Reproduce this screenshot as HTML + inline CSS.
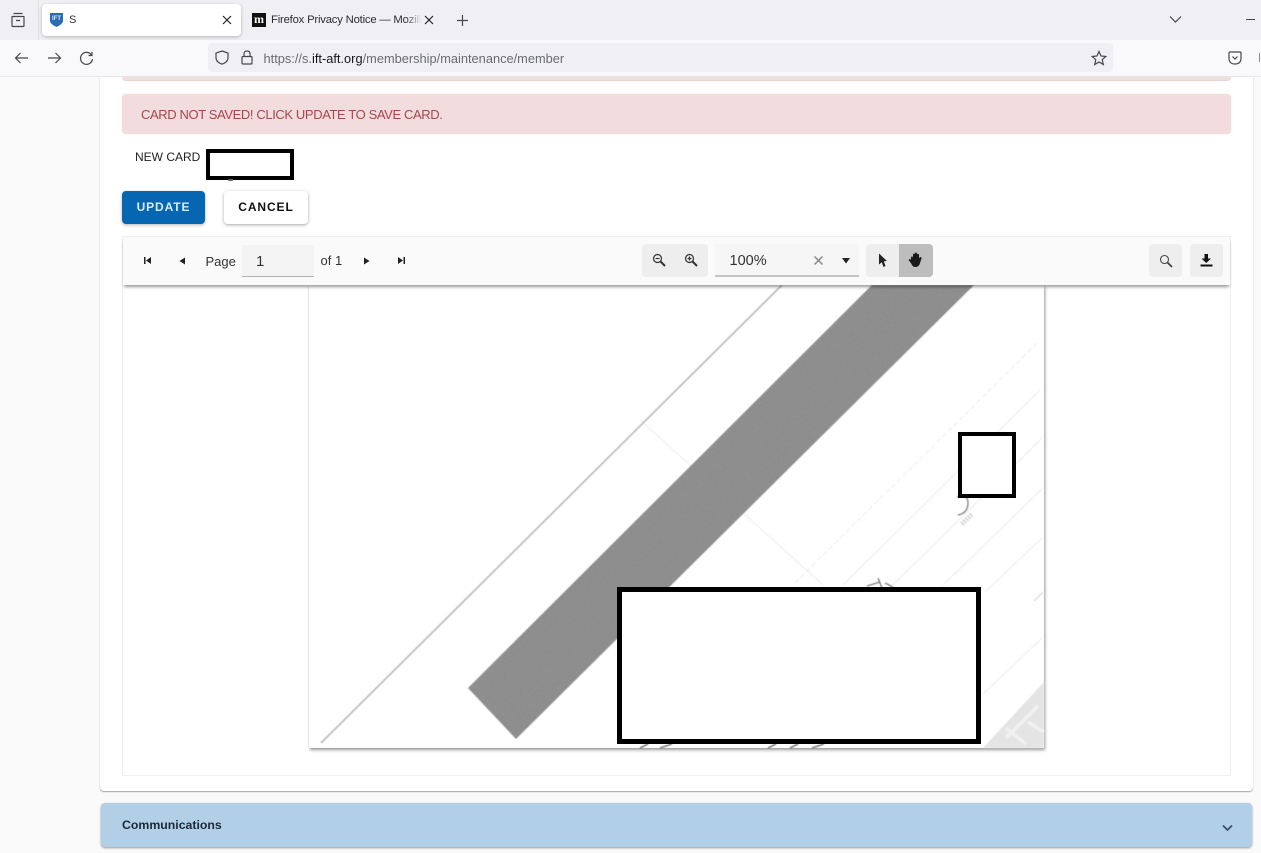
<!DOCTYPE html>
<html>
<head>
<meta charset="utf-8">
<title>S</title>
<style>
html,body{margin:0;padding:0;width:1261px;height:853px;overflow:hidden;background:#fafafa;font-family:"Liberation Sans",sans-serif;color:#222}
.a{position:absolute}
svg{position:absolute;overflow:visible}
.t{position:absolute;white-space:nowrap}
.btn{position:absolute;background:#eeeeee;border-radius:4px}
</style>
</head>
<body>
<!-- browser tab bar -->
<div class="a" style="left:0;top:0;width:1261px;height:40px;background:#f0f0f4"></div>
<div class="a" style="left:0;top:40px;width:1261px;height:36px;background:#f9f9fb"></div>
<div class="a" style="left:0;top:76px;width:1261px;height:1px;background:#e8e6e6"></div>
<div class="a" style="left:38px;top:0;width:1px;height:40px;background:#e0e0e4"></div>
<svg style="left:10px;top:12px" width="16" height="16" fill="none" stroke="#45454d" stroke-width="1.200"><path d="M3.500 1.500H12.500M1.500 4.500H14.500M2 5V13.500Q2 14.500 3 14.500H13Q14 14.500 14 13.500V5M6 8.500H10"/></svg>
<div class="a" style="left:42px;top:4px;width:199px;height:32px;background:#fff;border-radius:4px;box-shadow:0 1px 3px rgba(0,0,0,.25)"></div>
<svg style="left:50px;top:13px" width="13" height="14"><path d="M0 0H13V8Q13 11 6.500 14Q0 11 0 8Z" fill="#2a6cb5"/><text x="6.500" y="7" font-size="6" font-weight="bold" text-anchor="middle" fill="#dbe8f5" font-family="Liberation Sans, sans-serif">IFT</text></svg>
<div class="t" style="left:69px;top:14px;font-size:11px;color:#333">S</div>
<svg style="left:222px;top:15px" width="10" height="10" stroke="#222" stroke-width="1.200"><path d="M1 1L9 9M9 1L1 9"/></svg>
<div class="a" style="left:252px;top:13px;width:14px;height:14px;background:#111;color:#fff;font:bold 12px/13px 'Liberation Serif',serif;text-align:center;overflow:hidden">m</div>
<div class="t" style="left:271px;top:14px;width:150px;overflow:hidden;font-size:11.300px;color:#2b2b33;letter-spacing:-.2px;-webkit-mask-image:linear-gradient(90deg,#000 90%,transparent)">Firefox Privacy Notice — Mozilla</div>
<svg style="left:424px;top:15px" width="10" height="10" stroke="#222" stroke-width="1.200"><path d="M1 1L9 9M9 1L1 9"/></svg>
<svg style="left:456px;top:14px" width="13" height="13" stroke="#45454d" stroke-width="1.200"><path d="M6.500 1V12M1 6.500H12"/></svg>
<svg style="left:1169px;top:15px" width="13" height="9" fill="none" stroke="#45454d" stroke-width="1.200"><path d="M1 1.500L6.500 7L12 1.500"/></svg>
<div class="a" style="left:1246px;top:19px;width:9px;height:1px;background:#45454d"></div>

<!-- nav bar -->
<svg style="left:14px;top:51px" width="15" height="14" fill="none" stroke="#45454d" stroke-width="1.200"><path d="M14 7H1.500M6.500 2L1.500 7L6.500 12"/></svg>
<svg style="left:47px;top:51px" width="15" height="14" fill="none" stroke="#45454d" stroke-width="1.200"><path d="M1 7H13.500M8.500 2L13.500 7L8.500 12"/></svg>
<svg style="left:79px;top:51px" width="15" height="15" fill="none" stroke="#45454d" stroke-width="1.200"><path d="M12.500 4A6 6 0 1 0 13.500 8M13 1V4.500H9.500"/></svg>
<div class="a" style="left:208px;top:43px;width:905px;height:29px;background:#f0f0f4;border-radius:4px"></div>
<svg style="left:215px;top:50px" width="14" height="15" fill="none" stroke="#45454d" stroke-width="1.200"><path d="M7 1L13 3V8Q13 12 7 14.200Q1 12 1 8V3Z"/></svg>
<svg style="left:241px;top:50px" width="12" height="15" fill="none" stroke="#45454d" stroke-width="1.200"><rect x="1" y="6.500" width="10" height="7.500" rx="1"/><path d="M3 6.500V4Q3 1 6 1Q9 1 9 4V6.500"/></svg>
<div class="t" style="left:263.500px;top:51px;font-size:12.800px;color:#6a6a72;letter-spacing:.01px">https://s.<span style="color:#15141a">ift-aft.org</span>/membership/maintenance/member</div>
<svg style="left:1091px;top:50px" width="16" height="16" fill="none" stroke="#45454d" stroke-width="1.200"><path d="M8 1.500L10 6L14.800 6.500L11.200 9.700L12.300 14.500L8 12L3.700 14.500L4.800 9.700L1.200 6.500L6 6Z"/></svg>
<svg style="left:1228px;top:51px" width="14" height="14" fill="none" stroke="#45454d" stroke-width="1.200"><path d="M1 2Q1 1 2 1H12Q13 1 13 2V7Q13 13 7 13Q1 13 1 7ZM4.500 5.500L7 8L9.500 5.500"/></svg>
<div class="a" style="left:1259px;top:53px;width:2px;height:9px;border-left:1px solid #8a8a90"></div>

<!-- main card -->
<div class="a" style="left:100px;top:77px;width:1153px;height:714px;background:#fff;border-radius:0 0 4px 4px;box-shadow:0 1px 1px rgba(0,0,0,.35),0 0 1px rgba(0,0,0,.06)"></div>
<div class="a" style="left:122px;top:77px;width:1109px;height:3px;background:#f2dede;border-bottom:1px solid #ead4d4;border-radius:0 0 4px 4px"></div>
<div class="a" style="left:122px;top:94px;width:1109px;height:40px;background:#f2dcde;border-radius:4px;box-shadow:0 0 1px rgba(0,0,0,.15)"></div>
<div class="t" style="left:141px;top:106.500px;font-size:13px;letter-spacing:-.39px;color:#a5474b">CARD NOT SAVED! CLICK UPDATE TO SAVE CARD.</div>
<div class="t" style="left:135px;top:149.500px;font-size:12px;color:#222">NEW CARD</div>
<div class="a" style="left:206px;top:149px;width:80px;height:23px;border:4px solid #000;background:#fff"></div>
<div class="a" style="left:228px;top:179px;width:5px;height:2px;background:#666;border-radius:1px"></div>
<div class="a" style="left:122px;top:191px;width:83px;height:33px;background:#0766b1;border-radius:4px;box-shadow:0 1px 3px rgba(0,0,0,.3)"></div>
<div class="t" style="left:122px;top:200px;width:83px;text-align:center;font-size:12px;font-weight:bold;color:#d8ecfb;letter-spacing:.9px">UPDATE</div>
<div class="a" style="left:224px;top:191px;width:84px;height:33px;background:#fff;border-radius:4px;box-shadow:0 1px 3px rgba(0,0,0,.35)"></div>
<div class="t" style="left:224px;top:200px;width:84px;text-align:center;font-size:12px;font-weight:bold;color:#111;letter-spacing:.9px">CANCEL</div>

<!-- viewer -->
<div class="a" style="left:122px;top:236px;width:1107px;height:538px;border:1px solid #efefef;background:#fff"></div>

<!-- pdf page -->
<div class="a" style="left:309px;top:285px;width:735px;height:463px;background:#fff;box-shadow:1px 2px 3px rgba(0,0,0,.4),0 0 1px rgba(0,0,0,.15)"></div>
<svg style="left:0;top:0" width="1261" height="853">
  <defs>
    <filter id="soft" x="-5%" y="-5%" width="110%" height="110%"><feGaussianBlur stdDeviation=".45"/></filter>
    <filter id="noise" x="0" y="0" width="100%" height="100%">
      <feTurbulence type="fractalNoise" baseFrequency=".55" numOctaves="2" seed="4" result="n"/>
      <feColorMatrix in="n" type="matrix" values="0 0 0 0 .3  0 0 0 0 .3  0 0 0 0 .3  1.400 0 0 0 -.45" result="g"/>
      <feComposite in="g" in2="SourceGraphic" operator="in" result="c"/>
      <feMerge><feMergeNode in="SourceGraphic"/><feMergeNode in="c"/></feMerge>
    </filter>
  </defs>
  <g stroke="#ebebeb" stroke-width="1" fill="none" filter="url(#soft)">
    <path d="M1040 390L843 585"/>
    <path d="M1043 437L893 585"/>
    <path d="M1043 488L943 585"/>
    <path d="M1042 538L985 592"/>
    <path d="M640 420L823 585"/>
    <path d="M983 694L1043 637"/>
    <path d="M1043 592L1034 601" stroke="#cfcfcf"/>
    <path d="M1037 343L793 585" stroke-dasharray="5 3"/>
  </g>
  <g filter="url(#soft)">
    <path d="M782 285L321 743" stroke="#b8b8b8" stroke-width="1.600" fill="none"/>
    <path d="M872 285H974L516 739L468 688Z" fill="#8c8c8c" filter="url(#noise)"/>
    <path d="M983 748L1044 682V748Z" fill="#e4e4e4"/>
    <path d="M1006 738L1038 706M1028 722L1044 732M1006 728L1026 744" stroke="#f1f1f1" stroke-width="3.500" fill="none"/>
    <path d="M957 497Q968 493 968 503Q968 513 958 515" stroke="#777" stroke-width="1.200" fill="none"/>
    <path d="M962 524L972 514" stroke="#cfcfcf" stroke-width="5" stroke-dasharray="1.500 1.500" fill="none"/>
    <path d="M867 586L880 582M878 578L882 588M885 583L893 587" stroke="#666" stroke-width="1.100" fill="none"/>
    <path d="M640 748L648 744M660 748L672 744M768 748L776 744M790 748L798 744M812 748L824 744" stroke="#666" stroke-width="1.300" fill="none"/>
  </g>
</svg>
<div class="a" style="left:958px;top:432px;width:50px;height:58px;border:4px solid #000;background:#fff"></div>
<div class="a" style="left:617px;top:587px;width:354px;height:147px;border:5px solid #000;background:#fff"></div>

<!-- toolbar -->
<div class="a" style="left:123px;top:237px;width:1107px;height:48px;background:#fafafa;box-shadow:0 3px 3px -1px rgba(0,0,0,.4)"></div>
<svg style="left:143px;top:256px" width="9" height="9" fill="#222"><path d="M1 1H2.500V8H1ZM8 1V8L3 4.500Z"/></svg>
<svg style="left:178px;top:257px" width="8" height="8" fill="#222"><path d="M7 .5V7.500L1.500 4Z"/></svg>
<div class="t" style="left:205.500px;top:253.500px;font-size:13px;color:#333">Page</div>
<div class="a" style="left:242px;top:245px;width:72px;height:31px;background:#f4f4f4;border-bottom:1px solid #b0b0b0"></div>
<div class="t" style="left:256px;top:252.500px;font-size:15px;color:#333">1</div>
<div class="t" style="left:320.500px;top:253px;font-size:13px;color:#333">of 1</div>
<svg style="left:363px;top:257px" width="8" height="8" fill="#222"><path d="M1 .5V7.500L6.500 4Z"/></svg>
<svg style="left:397px;top:256px" width="9" height="9" fill="#222"><path d="M1 1V8L6 4.500ZM6.500 1H8V8H6.500Z"/></svg>

<div class="btn" style="left:642px;top:244px;width:66px;height:33px"></div>
<svg style="left:652px;top:253px" width="14" height="14" fill="none" stroke="#333" stroke-width="1.200"><circle cx="5.500" cy="5.500" r="4"/><path d="M3.500 5.500H7.500"/><path d="M8.500 8.500L13 13" stroke-width="2"/></svg>
<svg style="left:684px;top:253px" width="14" height="14" fill="none" stroke="#333" stroke-width="1.200"><circle cx="5.500" cy="5.500" r="4"/><path d="M3.500 5.500H7.500M5.500 3.500V7.500"/><path d="M8.500 8.500L13 13" stroke-width="2"/></svg>

<div class="a" style="left:715px;top:244px;width:144px;height:31px;background:#f6f6f6;border-bottom:2px solid #c4c4c4"></div>
<div class="t" style="left:729.500px;top:253px;font-size:14.500px;color:#333">100%</div>
<svg style="left:814px;top:256px" width="9" height="9" stroke="#888" stroke-width="1.500"><path d="M.5 .5L8.500 8.500M8.500 .5L.5 8.500"/></svg>
<svg style="left:842px;top:258px" width="8" height="6" fill="#222"><path d="M0 0H8L4 5.500Z"/></svg>

<div class="btn" style="left:866px;top:244px;width:33px;height:33px;border-radius:4px 0 0 4px"></div>
<div class="btn" style="left:899px;top:244px;width:34px;height:33px;background:#bdbdbd;border-radius:0 4px 4px 0"></div>
<svg style="left:878px;top:253px" width="10" height="15" fill="#222"><path d="M1 .5L9 8L5.800 8.300L7.500 13L5.500 14L3.800 9.200L1 11.500Z"/></svg>
<svg style="left:908px;top:252px" width="16" height="16" fill="#1a1a1a"><path d="M3 6Q3 4.500 4 4.500Q5 4.500 5 6V3Q5 1.500 6 1.500Q7 1.500 7 3V2Q7 .5 8 .5Q9 .5 9 2V3Q9 1.800 10 1.800Q11 1.800 11 3V6.500Q11.500 5 12.800 5Q13.800 5.200 13.500 6.500L12 11Q11 15 7.500 15Q4.500 15 3.500 12L1 8.500Q.5 7.500 1.300 7Q2.200 6.800 3 8Z"/></svg>

<div class="btn" style="left:1149px;top:244px;width:33px;height:33px"></div>
<svg style="left:1159px;top:254px" width="14" height="14" fill="none" stroke="#444" stroke-width="1.100"><circle cx="5.500" cy="5.500" r="4"/><path d="M8.500 8.500L13 13" stroke-width="1.800"/></svg>
<div class="btn" style="left:1190px;top:244px;width:33px;height:33px"></div>
<svg style="left:1200px;top:253px" width="13" height="15" fill="#111"><path d="M4.500 1H8V5.500H11L6.250 10L1.500 5.500H4.500ZM.5 11.500H12.500V13.500H.5Z"/></svg>

<!-- communications -->
<div class="a" style="left:101px;top:803px;width:1151px;height:44px;background:#b2cfe8;border-radius:4px;box-shadow:0 1px 2px rgba(0,0,0,.4)"></div>
<div class="t" style="left:122px;top:817.500px;font-size:12.300px;font-weight:bold;color:#1d2a35">Communications</div>
<svg style="left:1222px;top:824px" width="11" height="8" fill="none" stroke="#3d5266" stroke-width="1.800"><path d="M1 1.500L5.500 6L10 1.500"/></svg>
</body>
</html>
